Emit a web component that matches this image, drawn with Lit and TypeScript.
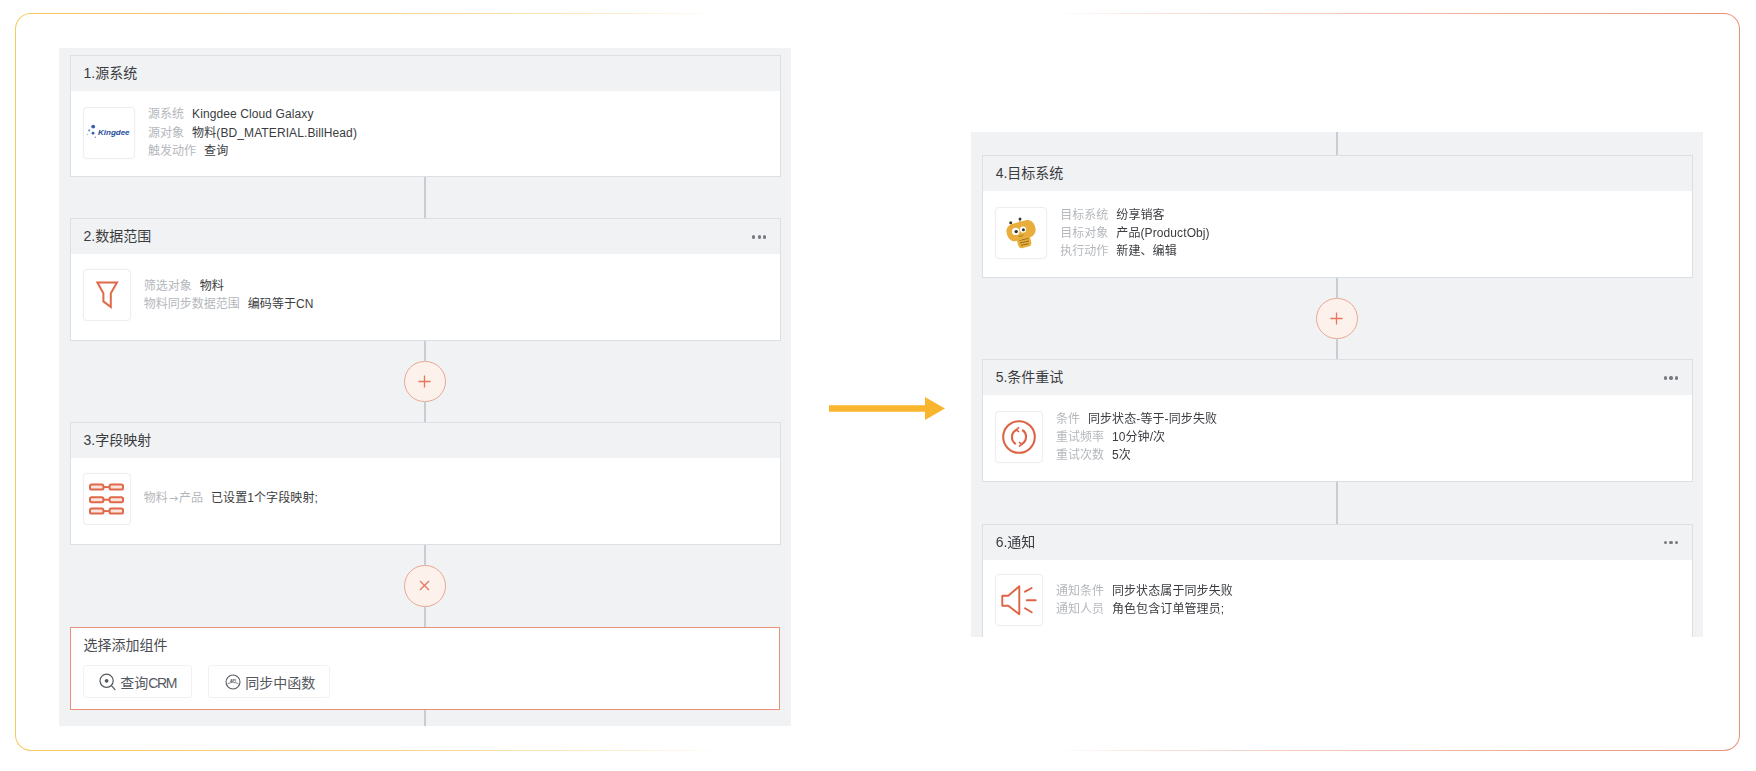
import { LitElement, html, css, svg } from "lit";
import { customElement } from "lit/decorators.js";

const kingdee = html`<svg width="46" height="20" viewBox="0 0 46 20">
  <circle cx="7.2" cy="3.6" r="1.9" fill="#2f5fae"/><circle cx="3.2" cy="7.4" r="1.1" fill="#6f94cc"/>
  <circle cx="7" cy="10.2" r="1.4" fill="#2f5fae"/><circle cx="1.6" cy="11.4" r=".7" fill="#9db7dc"/>
  <circle cx="9.4" cy="14.2" r=".8" fill="#6f94cc"/>
  <text x="12" y="12.2" class="kt">Kingdee</text></svg>`;

const funnel = html`<svg width="24" height="30" viewBox="0 0 24 30" fill="none" stroke="#e0694a" stroke-width="2" stroke-linejoin="miter">
  <path d="M2.4 2.4H22L15.8 13.2V27L8.4 21.4V13.2Z"/></svg>`;

const pill = (y: number) => svg`
  <rect x="1" y="${y}" width="13.4" height="5" rx="1.6"/>
  <rect x="20.6" y="${y}" width="13.4" height="5" rx="1.6"/>
  <path d="M14.4 ${y + 2.5}H20.6"/>`;
const mapping = html`<svg width="35" height="32" viewBox="0 0 35 32" fill="#fbe5de" stroke="#e0694a" stroke-width="2">
  ${pill(1.6)}${pill(14.2)}${pill(26.8 - 1.2)}</svg>`;

const retry = html`<svg width="36" height="36" viewBox="0 0 36 36" fill="none" stroke="#dd6444" stroke-width="2.1">
  <circle cx="18" cy="18" r="15.8"/>
  <path d="M15.8 10.8A8 8 0 0 0 14.8 25"/>
  <path d="M20.2 25.2A8 8 0 0 0 21.2 11"/>
  <path d="M18 8.4L15.4 10.8L18 12.9" stroke-width="1.7"/>
  <path d="M18 27.6L20.6 25.2L18 23.1" stroke-width="1.7"/></svg>`;

const speaker = html`<svg width="38" height="32" viewBox="0 0 38 32" fill="none" stroke="#dd6444" stroke-width="1.9" stroke-linejoin="round" stroke-linecap="round">
  <path d="M2.3 11.7H8.3L19.3 2.3V30.3L8.3 21.7H2.3Z"/>
  <path d="M25 7.7L31.7 4M26.7 16.3H35.7M25 24.3L31.7 28.3"/></svg>`;

const bee = html`<svg width="34" height="34" viewBox="0 0 34 34">
  <path d="M7 7L9.5 10M16 3L15.6 8" stroke="#7a6a3a" stroke-width=".8" fill="none"/>
  <circle cx="6.7" cy="6.7" r="1.5" fill="#3c3a38"/><circle cx="16" cy="2.9" r="1.5" fill="#3c3a38"/>
  <rect x="13.5" y="20.5" width="13.5" height="11" rx="4" fill="#e9ad3c" transform="rotate(-14 20 26)"/>
  <path d="M15.4 24.4L24.4 22.4M15.8 27L25 25M17 29.4L24.6 27.7" stroke="#8d6d22" stroke-width="1"/>
  <rect x="2.6" y="5.8" width="29" height="17.6" rx="7.5" fill="#e9ad3c" transform="rotate(-15 17 15)"/>
  <circle cx="11.7" cy="15.4" r="3.7" fill="#fff"/><circle cx="19" cy="13.6" r="3.1" fill="#fff"/>
  <circle cx="12.2" cy="15.6" r="1.7" fill="#35302a"/><circle cx="19.4" cy="13.8" r="1.5" fill="#35302a"/>
  <path d="M14.6 20.2Q17.4 21 19.4 18.8" stroke="#8d6d22" stroke-width=".8" fill="none"/></svg>`;

const searchIcon = html`<svg width="17" height="18" viewBox="0 0 17 18" fill="none" stroke="#55585d" stroke-width="1.2">
  <circle cx="7.6" cy="7.8" r="6.6"/><circle cx="7.6" cy="7.8" r="1.9" fill="#55585d" stroke="none"/>
  <path d="M12.4 12.6L16 16.6" stroke-linecap="round"/></svg>`;

const apiIcon = html`<svg width="16" height="16" viewBox="0 0 16 16" fill="none" stroke="#55585d" stroke-width="1.1">
  <circle cx="8" cy="8" r="7"/><path d="M2.6 9.6Q8 6.6 13.4 9.6" stroke-width=".7"/>
  <text x="8" y="8" class="api">API</text></svg>`;

interface Row { l: unknown; v: string; }
interface Card { title: string; wide: boolean; icon: unknown; more: boolean; rows: Row[]; }

const cards: Record<string, Card> = {
  c1: { title: "1.源系统", wide: true, icon: kingdee, more: false, rows: [
    { l: "源系统", v: "Kingdee Cloud Galaxy" }, { l: "源对象", v: "物料(BD_MATERIAL.BillHead)" }, { l: "触发动作", v: "查询" } ] },
  c2: { title: "2.数据范围", wide: false, icon: funnel, more: true, rows: [
    { l: "筛选对象", v: "物料" }, { l: "物料同步数据范围", v: "编码等于CN" } ] },
  c3: { title: "3.字段映射", wide: false, icon: mapping, more: false, rows: [
    { l: html`物料<span class="ar">→</span>产品`, v: "已设置1个字段映射;" } ] },
  c4: { title: "4.目标系统", wide: true, icon: bee, more: false, rows: [
    { l: "目标系统", v: "纷享销客" }, { l: "目标对象", v: "产品(ProductObj)" }, { l: "执行动作", v: "新建、编辑" } ] },
  c5: { title: "5.条件重试", wide: false, icon: retry, more: true, rows: [
    { l: "条件", v: "同步状态-等于-同步失败" }, { l: "重试频率", v: "10分钟/次" }, { l: "重试次数", v: "5次" } ] },
  c6: { title: "6.通知", wide: false, icon: speaker, more: true, rows: [
    { l: "通知条件", v: "同步状态属于同步失败" }, { l: "通知人员", v: "角色包含订单管理员;" } ] },
};

@customElement("app-root")
export class AppRoot extends LitElement {
  static styles = css`
    :host {
      display: block; width: 1756px; height: 771px; overflow: hidden; background: #fff;
      font-family: "Liberation Sans", "Noto Sans CJK SC", sans-serif;
    }
    .frame {
      box-sizing: border-box; margin: 13.4px 0 0 14.5px; width: 1725px; height: 738px;
      display: flex; align-items: flex-start; filter: blur(0.35px);
      border: 1.5px solid transparent; border-radius: 16px;
      background:
        linear-gradient(#fff, #fff) padding-box,
        linear-gradient(90deg, #f6c95f 0, #f8d386 22%, #fdf0d6 36%, #fff 41%, #fff 60%, #fae4dc 66%, #efb09c 85%, #e8917a 100%) border-box;
    }
    .panel {
      box-sizing: border-box; flex: none; overflow: hidden; background: #f1f2f4;
      display: flex; flex-direction: column; padding: 0 10px 0 11.5px;
    }
    .left { margin: 33.3px 0 0 43.3px; width: 732.2px; height: 678.5px; padding-top: 7.3px; }
    .right { margin: 118.1px 0 0 26px; width: 731.6px; height: 504.7px; }
    .arrow { flex: none; display: block; margin: 382.6px 0 0 38px; }
    .card {
      box-sizing: border-box; flex: none; height: 122.4px; background: #fff;
      border: 1.5px solid #dcdfe3;
    }
    .head {
      box-sizing: border-box; height: 35px; background: #f1f2f4; display: flex; align-items: center;
      justify-content: space-between; padding: 0 13.5px 3.6px 12.2px;
      font-size: 14px; color: #3a3c40;
    }
    .dots { display: flex; gap: 2.2px; margin-top: 4px; }
    .dots i { display: block; width: 3.4px; height: 3.4px; border-radius: 50%; background: #777a7f; }
    .body { display: flex; align-items: center; gap: 13px; padding: 14.4px 12px 0 11.6px; }
    .box {
      box-sizing: border-box; flex: none; width: 47.8px; height: 52.2px; display: flex; align-items: center;
      justify-content: center; border: 1px solid #eceef0; border-radius: 4px; background: #fff;
      box-shadow: 0 0 2px rgba(0, 0, 0, 0.04);
    }
    .box.wide { width: 52.2px; }
    .rows { font-size: 12px; line-height: 18.2px; white-space: nowrap; }
    .rows .l { color: #b4b7bc; margin-right: 8px; }
    .rows .v { color: #3a3c40; letter-spacing: 0.1px; }
    .ar { font-family: "DejaVu Sans", sans-serif; font-size: 11px; margin: 0 1px; }
    .kt { font: italic bold 8px "Liberation Sans", sans-serif; fill: #1f4e9a; }
    .api { font: bold 3.6px "Liberation Sans", sans-serif; fill: #55585d; stroke: none; text-anchor: middle; }
    .line { flex: none; width: 1.5px; background: #c9ccd2; align-self: center; margin-right: 1.5px; }
    .link { flex: none; display: flex; flex-direction: column; align-items: center; height: 82.3px; padding-right: 1.5px; }
    .link.short { height: 81.6px; }
    .link .line { flex: 1; margin: 0; }
    .circle {
      box-sizing: border-box; flex: none; width: 41.5px; height: 41.5px; border-radius: 50%;
      background: #fdf1ec; border: 1.5px solid #e9a793; display: flex; align-items: center; justify-content: center;
    }
    .select {
      box-sizing: border-box; flex: none; height: 83.4px; margin-right: 1px; background: #fff; border: 1.5px solid #e8917a;
      padding: 6.6px 12px 0 12.2px;
    }
    .select .ttl { font-size: 14px; line-height: 20px; color: #4a4c50; }
    .btns { display: flex; gap: 15.6px; margin-top: 10.2px; margin-left: -0.5px; }
    .btn {
      box-sizing: border-box; height: 33.6px; display: flex; align-items: center; gap: 4.2px;
      border: 1px solid #f1f2f4; border-radius: 3px; font-size: 14px; color: #55585d; background: #fff;
    }
    .b1 { width: 109.4px; padding-left: 15.2px; }
    .b1 b { font-weight: normal; letter-spacing: -1.4px; }
    .b2 { width: 122.4px; padding-left: 15.8px; gap: 4.6px; }
  `;

  private card(c: Card) {
    return html`<section class="card">
      <div class="head"><span>${c.title}</span>${c.more ? html`<span class="dots"><i></i><i></i><i></i></span>` : ""}</div>
      <div class="body">
        <div class="box ${c.wide ? "wide" : ""}">${c.icon}</div>
        <div class="rows">${c.rows.map((r) => html`<div><span class="l">${r.l}</span><span class="v">${r.v}</span></div>`)}</div>
      </div>
    </section>`;
  }

  private link(x: boolean, short = false) {
    const mark = x ? "M2 2L11 11M11 2L2 11" : "M.4 6.5H12.6M6.5 .4V12.6";
    return html`<div class="link ${short ? "short" : ""}">
      <div class="line"></div>
      <div class="circle"><svg width="13" height="13" viewBox="0 0 13 13" fill="none" stroke="#e6765c" stroke-width="1.3"><path d="${mark}"/></svg></div>
      <div class="line"></div>
    </div>`;
  }

  render() {
    return html`<div class="frame">
      <div class="panel left">
        ${this.card(cards.c1)}
        <div class="line" style="height:41px"></div>
        ${this.card(cards.c2)}
        ${this.link(false, true)}
        ${this.card(cards.c3)}
        ${this.link(true)}
        <section class="select">
          <div class="ttl">选择添加组件</div>
          <div class="btns">
            <div class="btn b1">${searchIcon}<span>查询<b>CRM</b></span></div>
            <div class="btn b2">${apiIcon}<span>同步中函数</span></div>
          </div>
        </section>
        <div class="line" style="height:20px"></div>
      </div>
      <svg class="arrow" width="116" height="23" viewBox="0 0 116 23"><path d="M0 8.2H96V0L116 11.5L96 23V14.8H0Z" fill="#f9b52e"/></svg>
      <div class="panel right">
        <div class="line" style="height:23px"></div>
        ${this.card(cards.c4)}
        ${this.link(false, true)}
        ${this.card(cards.c5)}
        <div class="line" style="height:42px"></div>
        ${this.card(cards.c6)}
      </div>
    </div>`;
  }
}
